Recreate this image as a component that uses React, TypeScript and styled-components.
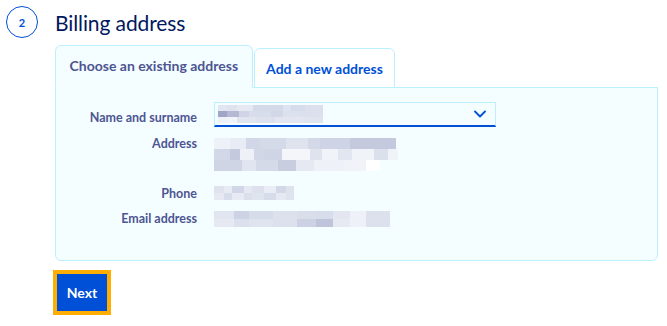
import React from "react";
import styled, { createGlobalStyle } from "styled-components";

const Global = createGlobalStyle`
  html, body { margin: 0; padding: 0; background: #fff; }
  body { font-family: "Source Sans Pro", Lato, "Noto Sans", sans-serif; }
`;

const Page = styled.div`
  width: 667px;
  height: 326px;
  padding: 6px 10px 0 6px;
  box-sizing: border-box;
`;

const Header = styled.div`
  display: flex;
  align-items: center;
  gap: 17px;
`;

const StepCircle = styled.div`
  width: 32px;
  height: 32px;
  box-sizing: border-box;
  border: 1px solid #0050d7;
  border-radius: 50%;
  display: flex;
  align-items: center;
  justify-content: center;
  color: #0050d7;
  font-size: 11px;
  font-weight: 700;
`;

const Title = styled.h2`
  margin: 0;
  font-size: 21px;
  font-weight: 400;
  color: #00185e;
  letter-spacing: -0.1px;
`;

const Content = styled.div`
  margin-left: 49px;
  margin-top: 7px;
`;

const Tabs = styled.div`
  display: flex;
  align-items: flex-end;
  position: relative;
  z-index: 1;
  margin-bottom: -1px;
`;

const Tab = styled.div<{ $active?: boolean }>`
  box-sizing: border-box;
  height: ${(p) => (p.$active ? "43px" : "40px")};
  padding: 0 ${(p) => (p.$active ? "13.5px" : "11.5px")};
  display: flex;
  align-items: center;
  justify-content: center;
  padding-bottom: ${(p) => (p.$active ? "2px" : "0")};
  border: 1px solid #bdf0ff;
  border-bottom: ${(p) => (p.$active ? "1px solid #f4fdff" : "1px solid #bdf0ff")};
  border-radius: 6px 6px 0 0;
  background: ${(p) => (p.$active ? "#f4fdff" : "#ffffff")};
  color: ${(p) => (p.$active ? "#4d5592" : "#0050d7")};
  font-size: 14px;
  font-weight: 700;
  margin-left: ${(p) => (p.$active ? "0" : "1px")};
  white-space: nowrap;
`;

const Panel = styled.div`
  box-sizing: border-box;
  width: 603px;
  height: 174px;
  border: 1px solid #bdf0ff;
  border-radius: 0 0 6px 6px;
  background: #f4fdff;
  padding-top: 22px;
`;

const Grid = styled.div`
  display: grid;
  grid-template-columns: 141px 282px;
  column-gap: 17px;
  align-items: start;
`;

const Label = styled.div<{ $h: number }>`
  text-align: right;
  font-size: 12.5px;
  font-weight: 700;
  color: #4d5592;
  height: ${(p) => p.$h}px;
  line-height: 16px;
`;

const Value = styled.div<{ $h: number; $top?: number }>`
  height: ${(p) => p.$h}px;
  padding-top: ${(p) => p.$top ?? 0}px;
  box-sizing: border-box;
`;

const Select = styled.div`
  box-sizing: border-box;
  height: 25px;
  width: 282px;
  border: 1px solid #bdf0ff;
  border-bottom: 2px solid #0050d7;
  background: #f4fdff;
  display: flex;
  align-items: center;
  justify-content: space-between;
  padding: 0 9px 0 3px;
  margin-top: -8px;
`;

const Blur = styled.div`
  display: flex;
  flex-direction: column;
`;

const BlurRow = styled.div`
  display: flex;
`;

const Cell = styled.div<{ $w: number; $h: number; $c: string }>`
  width: ${(p) => p.$w}px;
  height: ${(p) => p.$h}px;
  background: ${(p) => p.$c};
`;

const Footer = styled.div`
  margin-top: 9px;
  margin-left: -2px;
`;

const NextButton = styled.button`
  box-sizing: content-box;
  width: 50px;
  height: 37px;
  border: none;
  background: #0050d7;
  color: #fff;
  font-family: inherit;
  font-size: 14px;
  font-weight: 700;
  outline: 4px solid #ffad00;
  margin: 4px;
  padding: 0;
  cursor: pointer;
`;

type Row = [number, string][];
const BlurBlock: React.FC<{ rows: Row[]; h: number }> = ({ rows, h }) => (
  <Blur>
    {rows.map((r, i) => (
      <BlurRow key={i}>
        {r.map(([w, c], j) => (
          <Cell key={j} $w={w} $h={h} $c={c} />
        ))}
      </BlurRow>
    ))}
  </Blur>
);

const nameRows: Row[] = [
  [[9, "#e2e6f0"], [10, "#dfe3ee"], [16, "#e6e9f2"], [30, "#d5dae9"], [8, "#dfe3ef"], [14, "#d7dcea"], [18, "#dbe0ec"]],
  [[9, "#a0a5c5"], [12, "#b4b8d2"], [10, "#d0d4e6"], [22, "#d8ddeb"], [12, "#d3d8e8"], [18, "#dde1ee"], [22, "#dbe0ec"]],
  [[9, "#eef1f7"], [10, "#f0f3f8"], [20, "#e0e4ef"], [18, "#dde1ed"], [30, "#e3e6f0"], [18, "#e0e4ef"]],
];

const addrRows: Row[] = [
  [[16, "#eef1f7"], [16, "#e8ecf4"], [14, "#d2d7e8"], [26, "#d5dae9"], [22, "#dfe3ee"], [12, "#d4d9e8"], [30, "#ced3e5"], [16, "#c4c9de"], [30, "#c4c9de"]],
  [[16, "#d3d8e8"], [10, "#c4c9dd"], [14, "#eef1f7"], [10, "#d2d7e7"], [18, "#d0d5e6"], [28, "#f4f6fa"], [12, "#dfe3ee"], [16, "#f0f3f8"], [14, "#e2e6f0"], [22, "#f0f3f8"], [14, "#dbe0ec"], [10, "#f0f3f8"]],
  [[28, "#d0d5e6"], [14, "#e1e5ef"], [22, "#d5dae9"], [18, "#c8cde0"], [18, "#e6e9f2"], [30, "#eef1f7"], [22, "#f0f3f8"], [14, "#ffffff"]],
];

const phoneRows: Row[] = [
  [[10, "#dfe3ee"], [8, "#e8ebf3"], [12, "#d2d7e7"], [8, "#e6e9f2"], [12, "#dde1ed"], [12, "#eaedf4"], [10, "#d3d8e8"], [8, "#dfe3ee"]],
  [[10, "#e6e9f2"], [8, "#d8ddeb"], [12, "#e8ebf3"], [8, "#dbe0ec"], [12, "#e0e4ef"], [12, "#d7dcea"], [10, "#e6e9f2"], [8, "#dfe3ee"]],
];

const emailRows: Row[] = [
  [[20, "#e1e5ef"], [15, "#cdd2e4"], [24, "#d7dcea"], [24, "#dde1ed"], [19, "#dadeeb"], [17, "#d8ddeb"], [17, "#e3e6f0"], [16, "#eef1f7"], [24, "#dde1ed"]],
  [[20, "#e6e9f2"], [15, "#dbe0ec"], [24, "#e0e4ef"], [24, "#dde1ed"], [19, "#ccd1e3"], [17, "#bfc4da"], [17, "#e6e9f2"], [16, "#eef1f7"], [24, "#dde1ed"]],
];

const Chevron = () => (
  <svg width="12" height="8" viewBox="0 0 12 8" fill="none">
    <path d="M1 1.5 L6 6.5 L11 1.5" stroke="#0050d7" strokeWidth="1.8" strokeLinecap="round" strokeLinejoin="round" />
  </svg>
);

export default function App() {
  return (
    <Page>
      <Global />
      <Header>
        <StepCircle>2</StepCircle>
        <Title>Billing address</Title>
      </Header>
      <Content>
        <Tabs>
          <Tab $active>Choose an existing address</Tab>
          <Tab>Add a new address</Tab>
        </Tabs>
        <Panel>
          <Grid>
            <Label $h={26}>Name and surname</Label>
            <Value $h={26}>
              <Select>
                <BlurBlock rows={nameRows} h={6} />
                <Chevron />
              </Select>
            </Value>
            <Label $h={50}>Address</Label>
            <Value $h={50} $top={2}>
              <BlurBlock rows={addrRows} h={11} />
            </Value>
            <Label $h={25}>Phone</Label>
            <Value $h={25}>
              <BlurBlock rows={phoneRows} h={7} />
            </Value>
            <Label $h={25}>Email address</Label>
            <Value $h={25}>
              <BlurBlock rows={emailRows} h={8} />
            </Value>
          </Grid>
        </Panel>
        <Footer>
          <NextButton>Next</NextButton>
        </Footer>
      </Content>
    </Page>
  );
}
